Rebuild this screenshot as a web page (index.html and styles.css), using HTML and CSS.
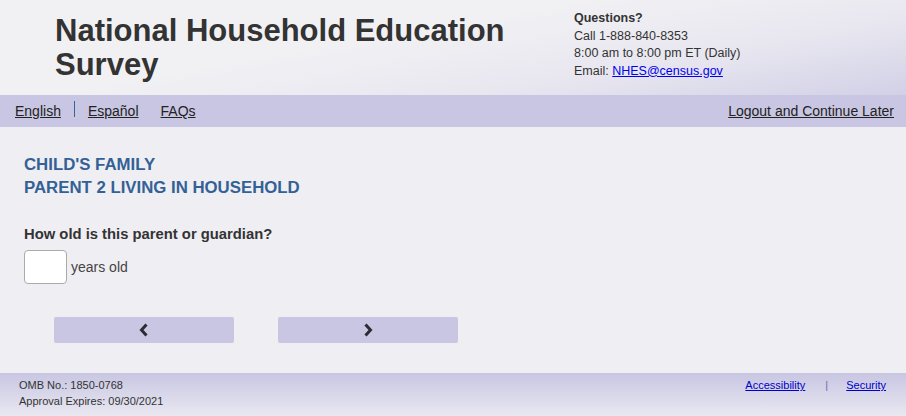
FILE: index.html
```html
<!DOCTYPE html>
<html lang="en">
<head>
  <meta charset="UTF-8" />
  <title>National Household Education Survey</title>
  <link rel="stylesheet" href="styles.css">
</head>
<body>
  <header class="header">
    <h1 class="title">National Household Education<br>Survey</h1>
    <div class="contact">
      <strong>Questions?</strong><br>
      Call 1-888-840-8353<br>
      8:00 am to 8:00 pm ET (Daily)<br>
      Email: <a href="#">NHES@census.gov</a>
    </div>
  </header>

  <nav class="nav">
    <div class="nav-left">
      <a href="#">English</a>
      <span class="sep"></span>
      <a href="#">Español</a>
      <a href="#" class="faq">FAQs</a>
    </div>
    <a href="#">Logout and Continue Later</a>
  </nav>

  <main class="content">
    <h2 class="section">CHILD'S FAMILY<br>PARENT 2 LIVING IN HOUSEHOLD</h2>
    <label class="question" for="age">How old is this parent or guardian?</label>
    <div class="answer">
      <input type="text" id="age" class="age">
      <span>years old</span>
    </div>
    <div class="buttons">
      <button class="navbtn" aria-label="Previous">
        <svg width="12" height="14" viewBox="0 0 12 14"><path d="M8.5 1.5 L3.5 7 L8.5 12.5" fill="none" stroke="#2b2b33" stroke-width="3"/></svg>
      </button>
      <button class="navbtn" aria-label="Next">
        <svg width="12" height="14" viewBox="0 0 12 14"><path d="M3.5 1.5 L8.5 7 L3.5 12.5" fill="none" stroke="#2b2b33" stroke-width="3"/></svg>
      </button>
    </div>
  </main>

  <footer class="footer">
    <div>
      OMB No.: 1850-0768<br>
      Approval Expires: 09/30/2021
    </div>
    <div class="footer-links">
      <a href="#">Accessibility</a>
      <span class="bar">|</span>
      <a href="#">Security</a>
    </div>
  </footer>
</body>
</html>
```
FILE: styles.css
```css
body {
  margin: 0;
  font-family: Arial, 'Liberation Sans', sans-serif;
  background: #efeef3;
  color: #333;
}

.header {
  height: 95px;
  display: flex;
  background: linear-gradient(170deg, #f1f1f4 40%, #e8e7f0 70%, #d2d0e6 100%);
  box-sizing: border-box;
}

.title {
  margin: 14px 0 0 55px;
  width: 519px;
  font-size: 31px;
  line-height: 34px;
  font-weight: bold;
  color: #333;
}

.contact {
  margin-top: 10px;
  font-size: 12.5px;
  line-height: 17.5px;
  color: #333;
}

.contact a {
  color: #0000ee;
}

.nav {
  height: 32px;
  background: #c8c6e2;
  display: flex;
  align-items: center;
  justify-content: space-between;
  padding: 0 12px 0 15px;
  font-size: 14px;
}

.nav a {
  color: #222;
}

.nav-left {
  display: flex;
  align-items: center;
}

.sep {
  width: 1px;
  height: 16px;
  background: #336699;
  margin: -4px 13px 0 13px;
}

.faq {
  margin-left: 22px;
}

.content {
  padding: 26px 24px 0;
  height: 220px;
}

.section {
  margin: 0 0 27px;
  font-size: 16.8px;
  line-height: 23px;
  color: #336196;
  font-weight: bold;
}

.question {
  display: block;
  font-size: 14.8px;
  font-weight: bold;
  color: #333;
  margin-bottom: 8px;
}

.answer {
  display: flex;
  align-items: center;
  font-size: 14px;
  color: #444;
}

.age {
  width: 43px;
  height: 34px;
  box-sizing: border-box;
  border: 1px solid #aaa;
  border-radius: 4px;
  background: #fff;
  margin-right: 4px;
}

.buttons {
  display: flex;
  gap: 44px;
  margin: 33px 0 0 30px;
}

.navbtn {
  width: 180px;
  height: 26px;
  background: #c8c6e2;
  border: none;
  border-radius: 2px;
  display: flex;
  align-items: center;
  justify-content: center;
  padding: 0;
}

.footer {
  height: 43px;
  background: linear-gradient(#c8c6e2, #ecebf2);
  display: flex;
  justify-content: space-between;
  padding: 4px 20px 0 19px;
  font-size: 11px;
  line-height: 16px;
  color: #333;
}

.footer-links {
  font-size: 11px;
}

.footer-links a {
  color: #0000cc;
}

.bar {
  margin: 0 15px 0 17px;
  color: #6a6ab0;
}
```
